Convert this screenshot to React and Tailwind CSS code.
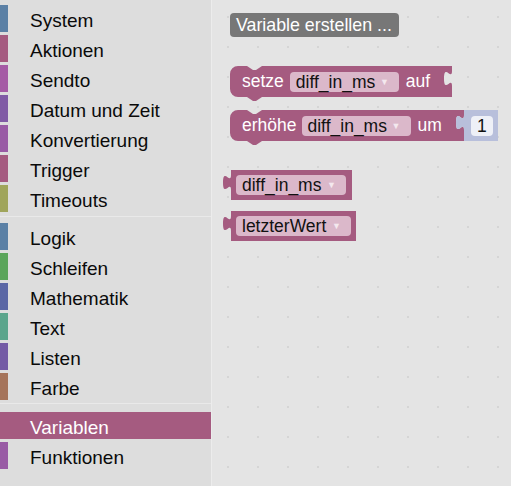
import React from "react";

const FONT = { fontFamily: '"Liberation Sans", Arial, sans-serif' };

function Row({ label, color, selected }) {
  if (selected) {
    return (
      <div className="h-[27px] mb-[3px] flex items-center bg-[#a55b80] text-white text-[19px] leading-[27px] pl-[30px]">
        <span className="pt-[4px]">{label}</span>
      </div>
    );
  }
  return (
    <div className="h-[27px] mb-[3px] flex items-center text-[19px] leading-[27px] text-[#0a0a0a]">
      <div className="w-[8px] h-[27px] shrink-0" style={{ backgroundColor: color }} />
      <span className="pl-[22px] pt-[4px]">{label}</span>
    </div>
  );
}

const g1 = [
  ["System", "#5b80a5"],
  ["Aktionen", "#a55b80"],
  ["Sendto", "#a55ba5"],
  ["Datum und Zeit", "#805ba5"],
  ["Konvertierung", "#995ba5"],
  ["Trigger", "#a55b80"],
  ["Timeouts", "#a0a55b"],
];
const g2 = [
  ["Logik", "#5b80a5"],
  ["Schleifen", "#5ba55b"],
  ["Mathematik", "#5b67a5"],
  ["Text", "#5ba58c"],
  ["Listen", "#745ba5"],
  ["Farbe", "#a5745b"],
];

function Field({ text, w }) {
  return (
    <div
      className="h-[20px] rounded-[4px] bg-[#dbb8ca] flex items-center pl-[6px] text-[17.5px] leading-[20px] text-[#111]"
      style={{ width: w }}
    >
      <span>{text}</span>
      <span className="ml-auto mr-[10px] text-[9px] text-[#f4e8ee]">▼</span>
    </div>
  );
}

function stmtPath(W, H) {
  return `M 0,8 A 8,8 0 0 1 8,0 H 17 l 6,4 3,0 6,-4 H ${W} V 5 c 0,10 -8,-8 -8,7.5 s 8,-2.5 8,7.5 V ${H} H 32 l -6,4 -3,0 -6,-4 H 8 A 8,8 0 0 1 0,${H - 8} Z`;
}

function getterPath(W, H) {
  return `M 8,0 H ${W + 8} V ${H} H 8 V 20 c 0,-10 -8,8 -8,-7.5 s 8,2.5 8,-7.5 Z`;
}

export default function App() {
  return (
    <div className="w-[511px] h-[486px] flex overflow-hidden bg-[#e4e4e4]" style={FONT}>
      {/* Toolbox */}
      <div className="w-[212px] h-full bg-[#dddddd] border-r border-[#ececec] pt-[5px] shrink-0">
        {g1.map(([l, c]) => (
          <Row key={l} label={l} color={c} />
        ))}
        <div className="h-[8px] pt-[1px]">
          <div className="border-t border-[#e9e9e9]" />
        </div>
        {g2.map(([l, c]) => (
          <Row key={l} label={l} color={c} />
        ))}
        <div className="h-[9px]">
          <div className="border-t border-[#e9e9e9]" />
        </div>
        <Row label="Variablen" selected />
        <Row label="Funktionen" color="#995ba5" />
      </div>

      {/* Workspace */}
      <div className="relative flex-1 h-full bg-[#e4e4e4]">
        <svg className="absolute inset-0" width="298" height="486">
          <defs>
            <pattern id="grid" width="30" height="30" patternUnits="userSpaceOnUse">
              <rect x="15" y="16" width="2" height="2" fill="#d5d5d5" />
            </pattern>
          </defs>
          <rect width="298" height="486" fill="url(#grid)" />
        </svg>

        {/* Button */}
        <div className="absolute left-[18px] top-[13px] w-[169px] h-[24px] rounded-[4px] bg-[#777777] text-white text-[17.8px] leading-[24px] pl-[6px]">
          Variable erstellen ...
        </div>

        {/* setze block */}
        <div className="absolute left-[18px] top-[66px] w-[222px] h-[35px]">
          <svg className="absolute inset-0" width="222" height="36">
            <path d={stmtPath(222, 31)} fill="#a55b80" />
          </svg>
          <div className="relative h-[31px] flex items-center pl-[12px] text-white text-[17.5px]">
            <span>setze</span>
            <div className="ml-[6px]">
              <Field text="diff_in_ms" w={109} />
            </div>
            <span className="ml-[7px]">auf</span>
          </div>
        </div>

        {/* erhöhe block */}
        <div className="absolute left-[18px] top-[110px] w-[270px] h-[36px]">
          <svg className="absolute inset-0" width="270" height="36">
            <path d={stmtPath(234, 31)} fill="#a55b80" />
            <path d={getterPath(34, 31)} transform="translate(226,0)" fill="#b8bfdb" />
          </svg>
          <div className="relative h-[31px] flex items-center pl-[12px] text-white text-[17.5px]">
            <span>erhöhe</span>
            <div className="ml-[5px]">
              <Field text="diff_in_ms" w={109} />
            </div>
            <span className="ml-[7px]">um</span>
            <div className="ml-[29px] w-[22px] h-[20px] rounded-[4px] bg-[#eef0f7] text-[#111] text-[17.5px] leading-[20px] text-center">
              1
            </div>
          </div>
        </div>

        {/* getter diff_in_ms */}
        <div className="absolute left-[11px] top-[170px] w-[130px] h-[30px]">
          <svg className="absolute inset-0" width="130" height="30">
            <path d={getterPath(121, 30)} fill="#a55b80" />
          </svg>
          <div className="relative h-[30px] flex items-center pl-[13px]">
            <Field text="diff_in_ms" w={110} />
          </div>
        </div>

        {/* getter letzterWert */}
        <div className="absolute left-[11px] top-[211px] w-[134px] h-[30px]">
          <svg className="absolute inset-0" width="134" height="30">
            <path d={getterPath(125, 30)} fill="#a55b80" />
          </svg>
          <div className="relative h-[30px] flex items-center pl-[13px]">
            <Field text="letzterWert" w={115} />
          </div>
        </div>
      </div>
    </div>
  );
}
